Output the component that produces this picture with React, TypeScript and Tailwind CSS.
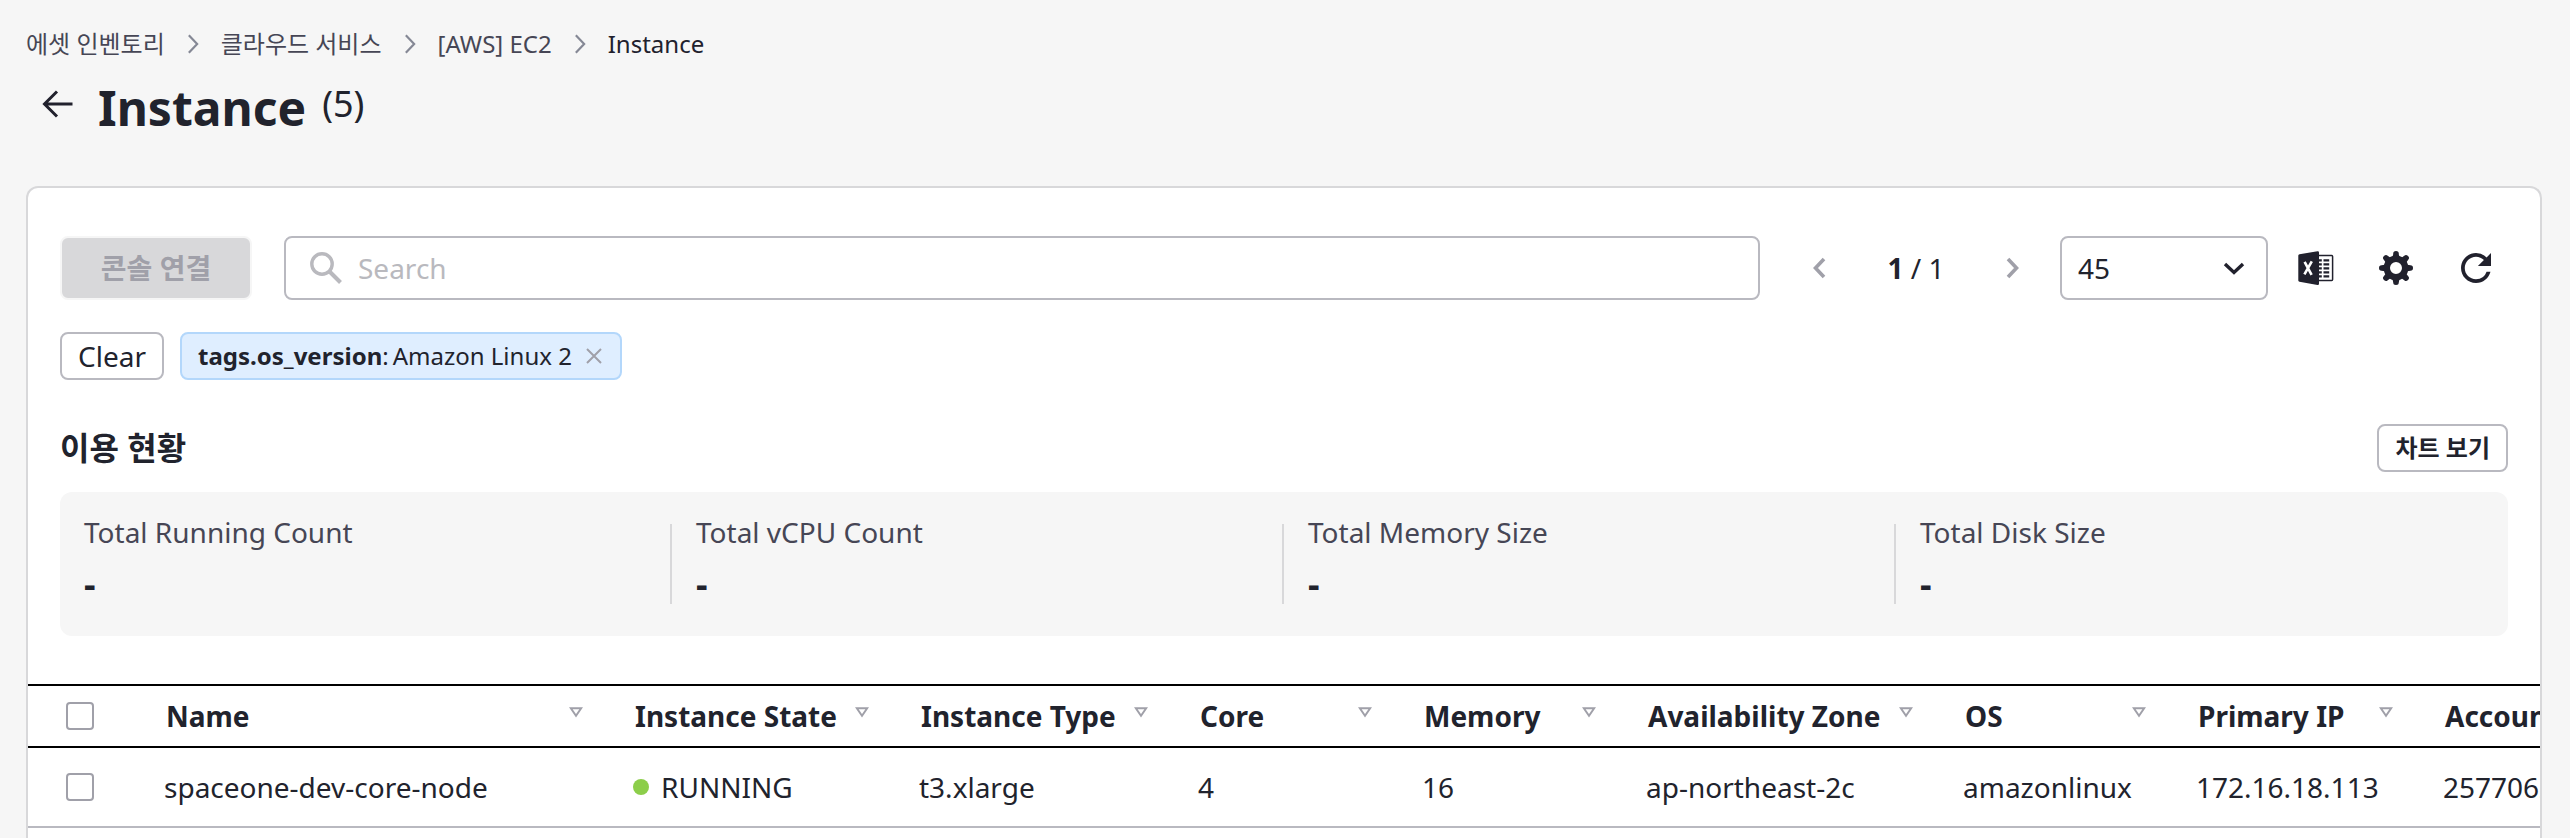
import React from "react";

const crumbs = ["에셋 인벤토리", "클라우드 서비스", "[AWS] EC2"];
const stats = ["Total Running Count", "Total vCPU Count", "Total Memory Size", "Total Disk Size"];

const columns = [
  { label: "Name", value: "spaceone-dev-core-node", width: "w-[469px]" },
  { label: "Instance State", value: "RUNNING", width: "w-[286px]" },
  { label: "Instance Type", value: "t3.xlarge", width: "w-[279px]" },
  { label: "Core", value: "4", width: "w-[224px]" },
  { label: "Memory", value: "16", width: "w-[224px]" },
  { label: "Availability Zone", value: "ap-northeast-2c", width: "w-[317px]" },
  { label: "OS", value: "amazonlinux", width: "w-[233px]" },
  { label: "Primary IP", value: "172.16.18.113", width: "w-[247px]" },
  { label: "Account ID", value: "257706205430", width: "w-[280px]" },
];

function Chevron({ className, d, width }: { className: string; d: string; width: number }) {
  return (
    <svg className={className} viewBox="0 0 24 24" fill="none" stroke="currentColor" strokeWidth={width} aria-hidden="true">
      <path d={d} />
    </svg>
  );
}

function ExcelIcon() {
  return (
    <svg className="size-9" viewBox="0 0 36 36" aria-hidden="true">
      <path d="M1.500 4.200Q0.300 4.500 0.300 5.600V30.500Q0.300 31.600 1.500 31.800L19.500 35Q21 35.200 21 33.800V2.400Q21 1 19.500 1.200z" fill="#21212d" />
      <path d="M21 5.500h12.600q1 0 1 1v23q0 1-1 1H21" fill="none" stroke="#21212d" strokeWidth="1.500" />
      <path d="M21 10.400h2.800M21 14.400h2.800M21 18.400h2.800M21 22.400h2.800M21 26.400h2.800M25.500 10.400h5.700M25.500 14.400h5.700M25.500 18.400h5.700M25.500 22.400h5.700M25.500 26.400h5.700" stroke="#21212d" strokeWidth="2.100" />
      <path d="M6.600 11.800l7 13M13.800 11.400L6.400 24.400" stroke="#fff" strokeWidth="2.600" />
    </svg>
  );
}

function GearIcon() {
  return (
    <svg className="size-9" viewBox="0 0 36 36" aria-hidden="true">
      <g fill="#21212d">
        {[0, 45, 90, 135, 180, 225, 270, 315].map((a) => (
          <path key={a} transform={`rotate(${a} 18 18)`} d="M13 9.500Q15.200 7 15.200 3.500 15.200 1 18 1t2.800 2.500Q20.800 7 23 9.500z" />
        ))}
      </g>
      <circle cx="18" cy="18" r="9.200" fill="none" stroke="#21212d" strokeWidth="6.400" />
    </svg>
  );
}

function RefreshIcon() {
  return (
    <svg className="size-9" viewBox="2.4 2.4 19.2 19.2" fill="#21212d" aria-hidden="true">
      <path d="M17.650 6.350A7.958 7.958 0 0 0 12 4c-4.420 0-7.990 3.580-7.990 8s3.570 8 7.990 8c3.730 0 6.840-2.550 7.730-6h-2.080A5.990 5.990 0 0 1 12 18c-3.310 0-6-2.690-6-6s2.690-6 6-6c1.660 0 3.140.690 4.220 1.780L13 11h7V4z" />
    </svg>
  );
}

function SortIcon() {
  return (
    <svg className="mb-2 h-[11px] w-[14px] shrink-0" viewBox="0 0 14 11" fill="none" stroke="#a0a0a9" strokeWidth="2" aria-hidden="true">
      <path d="M1.800 1.200h10.400L7 8.800z" />
    </svg>
  );
}

const checkbox = "block size-7 appearance-none rounded-[4px] border-2 border-[#a0a0a9] bg-white checked:bg-[#21212d]";

export default function App() {
  return (
    <div className="flex min-h-screen flex-col bg-[#f6f6f6] pl-[26px] pr-7 pt-6 font-['Noto_Sans','Noto_Sans_CJK_KR',sans-serif] text-[28px] leading-10 text-[#21232d]">
      <nav aria-label="Breadcrumb" className="flex items-center gap-[22px] text-[24px] leading-10 text-[#464655]">
        {crumbs.map((c) => (
          <React.Fragment key={c}>
            <a href="#">{c}</a>
            <Chevron className="-mx-1 h-5 w-5 text-[#858895]" d="M7 1.500L17 12 7 22.500" width={2.600} />
          </React.Fragment>
        ))}
        <span aria-current="page" className="text-[#21212d]">Instance</span>
      </nav>

      <header className="mt-2 flex h-[72px] items-center pl-4">
        <button type="button" aria-label="Back" className="mb-2 mr-6">
          <svg className="h-8 w-8" viewBox="0 0 32 32" fill="none" stroke="#21212d" strokeWidth="3" aria-hidden="true">
            <path d="M30.500 16H3M15 3.500L2.500 16 15 28.500" />
          </svg>
        </button>
        <h1 className="text-[48px] font-bold leading-[72px]">Instance</h1>
        <span className="mb-2 ml-4 text-[36px] leading-[56px]">(5)</span>
      </header>

      <main className="mt-[42px] flex-1 overflow-hidden rounded-t-[12px] border-2 border-b-0 border-[#d8d8da] bg-white">
        <div className="px-8 pt-12">
          <div className="flex items-center">
            <button type="button" disabled className="h-16 w-48 rounded-[8px] border-2 border-[#f6f6f6] bg-[#d8d8da] font-bold text-[#a0a0a9]">
              콘솔 연결
            </button>
            <label className="ml-8 flex h-16 min-w-0 flex-1 items-center rounded-[8px] border-2 border-[#b9b9c0] pl-6">
              <svg className="size-8 shrink-0" viewBox="0 0 32 32" fill="none" stroke="#b9b9be" aria-hidden="true">
                <circle cx="12" cy="12" r="10.200" strokeWidth="3.400" />
                <path d="M19.500 19.500L30.500 30.500" strokeWidth="4" />
              </svg>
              <input type="text" aria-label="Search" placeholder="Search" className="ml-4 min-w-0 flex-1 bg-transparent outline-none placeholder:text-[#b9b9be]" />
            </label>
            <div className="ml-12 flex items-center">
              <button type="button" aria-label="Previous page">
                <Chevron className="size-6 text-[#a0a0a9]" d="M16 3L7.500 12 16 21" width={3.600} />
              </button>
              <span className="w-[168px] text-center"><b>1</b> / 1</span>
              <button type="button" aria-label="Next page">
                <Chevron className="size-6 text-[#a0a0a9]" d="M8 3L16.500 12 8 21" width={3.600} />
              </button>
            </div>
            <div className="ml-9 grid w-[208px] items-center">
              <select aria-label="Rows per page" className="col-start-1 row-start-1 h-16 w-full appearance-none rounded-[8px] border-2 border-[#b9b9c0] bg-white pl-4">
                <option>45</option>
              </select>
              <Chevron className="pointer-events-none col-start-1 row-start-1 mr-[22px] size-6 justify-self-end text-[#21212d]" d="M3 8L12 16.500 21 8" width={3.400} />
            </div>
            <div className="ml-[30px] mr-[14px] flex items-center gap-11">
              <button type="button" aria-label="Export to Excel"><ExcelIcon /></button>
              <button type="button" aria-label="Settings"><GearIcon /></button>
              <button type="button" aria-label="Refresh"><RefreshIcon /></button>
            </div>
          </div>

          <div className="mt-8 flex items-center gap-4">
            <button type="button" className="h-12 rounded-[8px] border-2 border-[#b9b9c0] px-4 leading-[44px]">Clear</button>
            <div className="flex h-12 items-center rounded-[8px] border-2 border-[#b3d7fb] bg-[#dfeeff] px-4 text-[24px]">
              <b>tags.os_version</b>:<span className="ml-1">Amazon Linux 2</span>
              <button type="button" aria-label="Remove filter" className="ml-3">
                <svg className="size-5" viewBox="0 0 20 20" stroke="#a0a0a9" strokeWidth="2" aria-hidden="true">
                  <path d="M3 3l14 14M17 3L3 17" />
                </svg>
              </button>
            </div>
          </div>

          <div className="mt-11 flex items-center justify-between">
            <h2 className="text-[32px] font-bold leading-[48px]">이용 현황</h2>
            <button type="button" className="h-12 rounded-[8px] border-2 border-[#b9b9c0] px-4 text-[24px] font-bold leading-[44px]">차트 보기</button>
          </div>

          <dl className="mt-5 grid grid-cols-4 rounded-[12px] bg-[#f6f6f6] py-4">
            {stats.map((s) => (
              <div key={s} className="relative h-28 pl-6 pt-1 after:absolute after:right-0 after:top-4 after:h-20 after:w-[2px] after:bg-[#d8d8da] last:after:hidden">
                <dt className="text-[#464655]">{s}</dt>
                <dd className="mt-2 text-[36px] font-bold leading-[48px]">-</dd>
              </div>
            ))}
          </dl>
        </div>

        <table className="mt-12 w-[2663px] table-fixed border-separate border-spacing-0 text-left">
          <thead>
            <tr className="h-16">
              <th className="w-[104px] border-y-2 border-black p-0 pl-[38px]">
                <input type="checkbox" aria-label="Select all rows" className={checkbox} />
              </th>
              {columns.map((c) => (
                <th key={c.label} className={`${c.width} border-y-2 border-black p-0 pl-[34px] pr-[18px] font-bold`}>
                  <div className="flex items-center justify-between whitespace-nowrap">
                    {c.label}
                    <SortIcon />
                  </div>
                </th>
              ))}
            </tr>
          </thead>
          <tbody>
            <tr className="h-20">
              <td className="border-b-2 border-[#b9b9c0] p-0 pl-[38px]">
                <input type="checkbox" aria-label="Select spaceone-dev-core-node" className={checkbox} />
              </td>
              {columns.map((c) => (
                <td key={c.label} className="whitespace-nowrap border-b-2 border-[#b9b9c0] p-0 pl-8">
                  {c.label === "Instance State" ? (
                    <span className="flex items-center gap-3">
                      <span className="size-4 rounded-full bg-[#8cce4a]" />
                      {c.value}
                    </span>
                  ) : (
                    c.value
                  )}
                </td>
              ))}
            </tr>
          </tbody>
        </table>
      </main>
    </div>
  );
}
